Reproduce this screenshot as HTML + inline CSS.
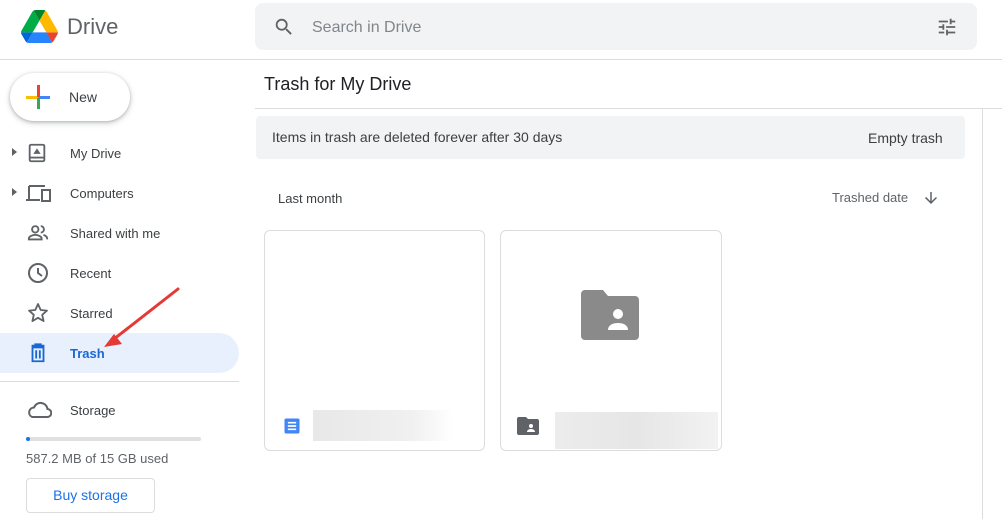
<!DOCTYPE html>
<html><head><style>
*{box-sizing:border-box;margin:0;padding:0}
body{width:1002px;height:519px;overflow:hidden;background:#fff;font-family:"Liberation Sans",Arial,sans-serif;color:#3c4043;position:relative}
.a{position:absolute}
.nav{position:absolute;left:70px;font-size:13px;color:#3c4043}
.ic{position:absolute;left:26px}
</style></head><body>
<!-- logo -->
<svg class="a" style="left:21px;top:10px" width="37" height="33" viewBox="0 0 87.3 78">
<path d="m6.6 66.85 3.85 6.65c.8 1.4 1.95 2.5 3.3 3.3l13.75-23.8h-27.5c0 1.55.4 3.1 1.2 4.5z" fill="#0066da"/>
<path d="m43.65 25-13.75-23.8c-1.35.8-2.5 1.9-3.3 3.3l-25.4 44a9.06 9.06 0 0 0 -1.2 4.5h27.5z" fill="#00ac47"/>
<path d="m73.55 76.8c1.35-.8 2.5-1.9 3.3-3.3l1.6-2.75 7.65-13.25c.8-1.4 1.2-2.95 1.2-4.5h-27.502l5.852 11.5z" fill="#ea4335"/>
<path d="m43.65 25 13.75-23.8c-1.35-.8-2.9-1.2-4.5-1.2h-18.5c-1.6 0-3.15.45-4.5 1.2z" fill="#00832d"/>
<path d="m59.8 53h-32.3l-13.75 23.8c1.35.8 2.9 1.2 4.5 1.2h50.8c1.6 0 3.15-.45 4.5-1.2z" fill="#2684fc"/>
<path d="m73.4 26.5-12.7-22c-.8-1.4-1.95-2.5-3.3-3.3l-13.75 23.8 16.15 28h27.45c0-1.55-.4-3.1-1.2-4.5z" fill="#ffba00"/>
</svg>
<div class="a" style="left:67px;top:14px;font-size:22px;color:#5f6368">Drive</div>
<!-- search -->
<div class="a" style="left:255px;top:3px;width:722px;height:47px;background:#f1f3f4;border-radius:8px"></div>
<svg class="a" style="left:273px;top:16px" width="22" height="22" viewBox="0 0 24 24"><path fill="#5f6368" d="M15.5 14h-.79l-.28-.27A6.47 6.47 0 0 0 16 9.5 6.5 6.5 0 1 0 9.5 16c1.61 0 3.09-.59 4.23-1.57l.27.28v.79l5 4.99L20.49 19zm-6 0C7.01 14 5 11.99 5 9.5S7.01 5 9.5 5 14 7.01 14 9.5 11.99 14 9.5 14"/></svg>
<div class="a" style="left:312px;top:19px;font-size:16px;color:#80868b">Search in Drive</div>
<svg class="a" style="left:936px;top:16px" width="22" height="22" viewBox="0 0 24 24"><path fill="#5f6368" d="M3 17v2h6v-2zM3 5v2h10V5zm10 16v-2h8v-2h-8v-2h-2v6zM7 9v2H3v2h4v2h2V9zm14 4v-2H11v2zm-6-4h2V7h4V5h-4V3h-2z"/></svg>
<div class="a" style="left:0;top:59px;width:1002px;height:1px;background:#dadce0"></div>
<!-- new -->
<div class="a" style="left:10px;top:73px;width:120px;height:48px;border-radius:24px;background:#fff;box-shadow:0 1px 3px rgba(60,64,67,.3),0 2px 6px 1px rgba(60,64,67,.15)"></div>
<div class="a" style="left:26px;top:96px;width:12px;height:3px;background:#fbbc04"></div>
<div class="a" style="left:38px;top:96px;width:12px;height:3px;background:#4285f4"></div>
<div class="a" style="left:37px;top:85px;width:3px;height:12px;background:#ea4335"></div>
<div class="a" style="left:37px;top:98px;width:3px;height:11px;background:#34a853"></div>
<div class="a" style="left:69px;top:89px;font-size:14px;color:#3c4043">New</div>
<!-- nav -->
<div class="a" style="left:12px;top:148px;border-left:5px solid #5f6368;border-top:4px solid transparent;border-bottom:4px solid transparent"></div>
<div class="a" style="left:12px;top:188px;border-left:5px solid #5f6368;border-top:4px solid transparent;border-bottom:4px solid transparent"></div>
<svg class="ic" style="top:142px" width="22" height="22" viewBox="0 0 24 24"><rect x="4" y="3" width="16" height="18" rx="1.5" fill="none" stroke="#5f6368" stroke-width="2"/><path d="M4 17h16" stroke="#5f6368" stroke-width="2"/><path d="M12 7l4 6H8z" fill="#5f6368"/></svg>
<div class="nav" style="top:146px">My Drive</div>
<svg class="ic" style="top:183px" width="26" height="20" viewBox="0 0 26 20"><path d="M3 3h16M3 3v13M0 17h14" stroke="#5f6368" stroke-width="2" fill="none"/><rect x="16" y="7" width="8" height="11" fill="none" stroke="#5f6368" stroke-width="2"/></svg>
<div class="nav" style="top:186px">Computers</div>
<svg class="ic" style="top:222px" width="24" height="22" viewBox="0 0 24 24"><circle cx="9" cy="8" r="3.5" fill="none" stroke="#5f6368" stroke-width="2"/><path d="M2 19v-1c0-2 4-4 7-4s7 2 7 4v1z" fill="none" stroke="#5f6368" stroke-width="2"/><path d="M15 4.5a3.5 3.5 0 0 1 0 7M18 14c2 .7 4 2 4 4v1" fill="none" stroke="#5f6368" stroke-width="2"/></svg>
<div class="nav" style="top:226px">Shared with me</div>
<svg class="ic" style="top:261px" width="24" height="24" viewBox="0 0 24 24"><circle cx="12" cy="12" r="9" fill="none" stroke="#5f6368" stroke-width="2"/><path d="M12 7v5l4 3" fill="none" stroke="#5f6368" stroke-width="2"/></svg>
<div class="nav" style="top:266px">Recent</div>
<svg class="ic" style="top:301px" width="24" height="24" viewBox="0 0 24 24"><path d="M12 3l2.7 6 6.3.6-4.8 4.2 1.4 6.3L12 16.8 6.4 20.1l1.4-6.3L3 9.6 9.3 9z" fill="none" stroke="#5f6368" stroke-width="1.8" stroke-linejoin="round"/></svg>
<div class="nav" style="top:306px">Starred</div>
<div class="a" style="left:0;top:333px;width:239px;height:40px;background:#e8f0fe;border-radius:0 20px 20px 0"></div>
<svg class="ic" style="top:342px" width="24" height="22" viewBox="0 0 24 24"><path d="M5 4h14M9 4V2.5h6V4M6 6h12v15H6z" fill="none" stroke="#1967d2" stroke-width="2"/><path d="M10 9v9M14 9v9" stroke="#1967d2" stroke-width="2"/></svg>
<div class="nav" style="top:346px;color:#1967d2;font-weight:bold">Trash</div>
<svg class="a" style="left:100px;top:285px" width="82" height="65" viewBox="0 0 82 65"><path d="M78 4L14 54" stroke="#e53935" stroke-width="3" stroke-linecap="round"/><path d="M4 62l18-3-8-10z" fill="#e53935"/></svg>
<div class="a" style="left:0;top:381px;width:239px;height:1px;background:#dadce0"></div>
<svg class="ic" style="top:399px" width="26" height="20" viewBox="0 0 26 20"><path d="M6 18h15a4 4 0 0 0 .5-8A7 7 0 0 0 8 8.5 5 5 0 0 0 6 18z" fill="none" stroke="#5f6368" stroke-width="2"/></svg>
<div class="nav" style="top:403px">Storage</div>
<div class="a" style="left:26px;top:437px;width:175px;height:4px;background:#e0e0e0;border-radius:2px"></div>
<div class="a" style="left:26px;top:437px;width:4px;height:4px;background:#1a73e8;border-radius:2px"></div>
<div class="a" style="left:26px;top:451px;font-size:13px;color:#5f6368">587.2 MB of 15 GB used</div>
<div class="a" style="left:26px;top:478px;width:129px;height:35px;border:1px solid #dadce0;border-radius:4px;font-size:14px;color:#1a73e8;text-align:center;line-height:33px">Buy storage</div>
<!-- main -->
<div class="a" style="left:264px;top:74px;font-size:18px;color:#202124">Trash for My Drive</div>
<div class="a" style="left:255px;top:108px;width:747px;height:1px;background:#dadce0"></div>
<div class="a" style="left:982px;top:108px;width:1px;height:411px;background:#dadce0"></div>
<div class="a" style="left:256px;top:116px;width:709px;height:43px;background:#f1f3f4;border-radius:4px"></div>
<div class="a" style="left:272px;top:129px;font-size:14px;color:#3c4043">Items in trash are deleted forever after 30 days</div>
<div class="a" style="left:868px;top:130px;font-size:14px;color:#3c4043">Empty trash</div>
<div class="a" style="left:278px;top:191px;font-size:13px;color:#3c4043">Last month</div>
<div class="a" style="left:832px;top:190px;font-size:13px;color:#5f6368">Trashed date</div>
<svg class="a" style="left:922px;top:189px" width="18" height="18" viewBox="0 0 24 24"><path fill="#5f6368" d="M20 12l-1.41-1.41L13 16.17V4h-2v12.17l-5.58-5.59L4 12l8 8z"/></svg>
<!-- cards -->
<div class="a" style="left:264px;top:230px;width:221px;height:221px;border:1px solid #dadce0;border-radius:6px"></div>
<svg class="a" style="left:282px;top:416px" width="20" height="20" viewBox="0 0 24 24"><path fill="#4285f4" d="M19 3H5a2 2 0 0 0-2 2v14a2 2 0 0 0 2 2h14a2 2 0 0 0 2-2V5a2 2 0 0 0-2-2m-2 14H7v-2h10zm0-4H7v-2h10zm0-4H7V7h10z"/></svg>
<div class="a" style="left:313px;top:410px;width:140px;height:31px;background:linear-gradient(90deg,#e8e8e8,#f0f0f0 70%,#fff)"></div>
<div class="a" style="left:500px;top:230px;width:222px;height:221px;border:1px solid #dadce0;border-radius:6px"></div>
<svg class="a" style="left:581px;top:290px" width="58" height="50" viewBox="0 0 58 50"><path d="M4 0h18l5 6h27a4 4 0 0 1 4 4v36a4 4 0 0 1-4 4H4a4 4 0 0 1-4-4V4a4 4 0 0 1 4-4z" fill="#8a8a8a"/><circle cx="37" cy="24" r="5" fill="#fff"/><path d="M27 40c0-5 5-7 10-7s10 2 10 7z" fill="#fff"/></svg>
<svg class="a" style="left:517px;top:417px" width="22" height="18" viewBox="0 0 22 18"><path d="M2 0h7l2 2h9a2 2 0 0 1 2 2v12a2 2 0 0 1-2 2H2a2 2 0 0 1-2-2V2a2 2 0 0 1 2-2z" fill="#5f6368"/><circle cx="14" cy="9" r="2" fill="#fff"/><path d="M10 15c0-2 2-3 4-3s4 1 4 3z" fill="#fff"/></svg>
<div class="a" style="left:555px;top:412px;width:163px;height:37px;background:linear-gradient(90deg,#ececec,#e6e6e6 50%,#f2f2f2)"></div>
</body></html>
